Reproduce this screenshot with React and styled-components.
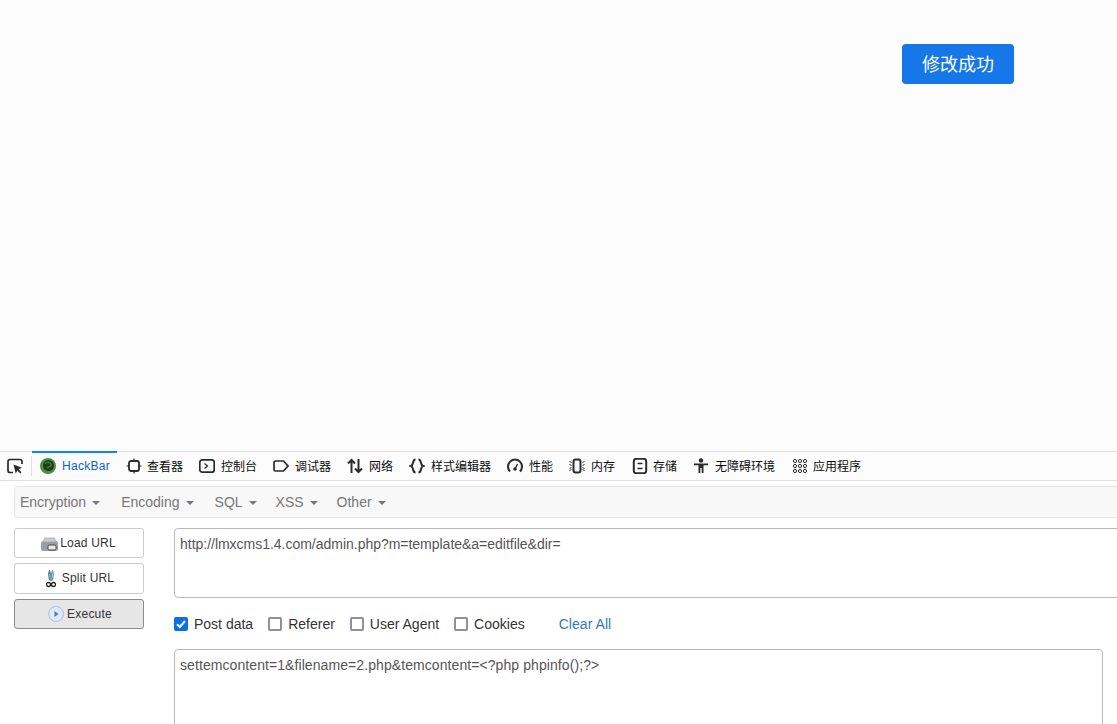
import React from "react";
import styled, { createGlobalStyle } from "styled-components";

const Global = createGlobalStyle`
  html, body { margin: 0; padding: 0; background: #fff; }
  #root { width: 1117px; height: 724px; overflow: hidden; }
  * { box-sizing: border-box; }
`;
const LATIN = `"Liberation Sans", Arial, sans-serif`;
const CJK = `"Liberation Sans", "Noto Sans CJK SC", sans-serif`;

const Page = styled.div`
  width: 1117px; height: 724px; overflow: hidden;
  display: flex; flex-direction: column; font-family: ${LATIN};
`;
const Viewport = styled.div`
  height: 451px; flex: none; background: #fcfcfc;
  display: flex; justify-content: flex-end; align-items: flex-start;
  padding: 44px 103px 0 0;
`;
const Toast = styled.div`
  width: 112px; height: 40px; border-radius: 4px; background: #1677e9; color: #fff;
  display: flex; align-items: center; justify-content: center;
  font: 18px ${CJK}; padding-bottom: 2px;
`;
const Toolbar = styled.div`
  height: 30px; flex: none; background: #fcfcfc;
  border-top: 1px solid #e0e0e1; border-bottom: 1px solid #e0e0e1;
  display: flex; align-items: stretch;
`;
const Picker = styled.div`
  width: 32px; flex: none; display: flex; align-items: center; padding-left: 7px; position: relative;
  &::after { content: ""; position: absolute; right: 0; top: 4px; bottom: 4px; width: 1px; background: #e0e0e1; }
`;
const Tab = styled.div`
  display: flex; align-items: center; gap: ${p => p.$gap ?? 6}px;
  width: ${p => p.$w}px; flex: none; padding-left: ${p => p.$pl ?? 8}px;
  font: 12px ${CJK}; color: ${p => (p.$active ? "#0a62d0" : "#0c0c0d")};
  position: relative;
  ${p => p.$active && `&::before { content: ""; position: absolute; left: 0; right: 0; top: -1px; height: 2px; background: #0a84ff; }`}
`;
const TabLabel = styled.span`
  margin-bottom: ${p => (p.$latin ? 0 : 2)}px;
  letter-spacing: ${p => (p.$latin ? 0.3 : 0)}px;
`;
const Panel = styled.div`
  flex: 1; background: #fff; padding: 5px 0 0 14px; min-height: 0;
`;
const Menu = styled.div`
  width: 1120px; height: 32px; background: #f8f8f8; border: 1px solid #e7e7e7; border-radius: 4px 0 0 4px;
  display: flex; align-items: center; padding-left: 5px;
  margin-bottom: 10px;
`;
const MenuItem = styled.div`
  display: flex; align-items: center; gap: 6px; font-size: 14px; color: #777;
  margin-right: ${p => p.$mr}px;
  &::after { content: ""; border-top: 4px solid #777; border-left: 4px solid transparent; border-right: 4px solid transparent; margin-top: 1px; }
`;
const Body = styled.div`
  display: flex; gap: 30px;
`;
const Side = styled.div`
  width: 130px; flex: none; display: flex; flex-direction: column; gap: 5px;
`;
const Btn = styled.div`
  height: ${p => p.$h}px; border-radius: 3px;
  border: 1px solid ${p => (p.$active ? "#8c8c8c" : "#ccc")};
  background: ${p => (p.$active ? "#e6e6e6" : "#fff")};
  color: #333; font-size: 12px; letter-spacing: 0.2px;
  display: flex; align-items: center; justify-content: center; gap: ${p => p.$gap ?? 2}px;
  padding: 0 ${p => p.$pr ?? 0}px ${p => p.$pb ?? 0}px ${p => p.$pl ?? 0}px;
`;
const Main = styled.div`
  width: 960px; flex: none; display: flex; flex-direction: column;
`;
const Area = styled.div`
  width: ${p => p.$w}px; height: ${p => p.$h}px; flex: none;
  border: 1px solid #b9b9b9; border-radius: 4px; background: #fff;
  padding: 7px 5px; font-size: 14px; line-height: 17px; color: #555; white-space: pre;
  letter-spacing: ${p => p.$ls ?? 0}px;
`;
const Checks = styled.div`
  height: 51px; display: flex; align-items: center;
`;
const Check = styled.label`
  display: flex; align-items: center; gap: 6px; font-size: 14px; color: #333; margin-right: ${p => p.$mr}px;
`;
const Box = styled.span`
  width: 14px; height: 14px; border-radius: 2px; flex: none;
  border: 2px solid ${p => (p.$on ? "#0a6fe0" : "#8f8f9d")};
  background: ${p => (p.$on ? "#0a6fe0" : "#fff")};
  display: flex; align-items: center; justify-content: center;
`;
const ClearAll = styled.span`
  font-size: 14px; color: #337ab7; letter-spacing: 0.05px;
`;

const Ic = ({ children, w = 16, h = 16, vb }) => (
  <svg width={w} height={h} viewBox={vb || `0 0 ${w} ${h}`} fill="none" stroke="#2b2b2e" strokeWidth="1.7" style={{ flex: "none" }}>
    {children}
  </svg>
);

const Logo = () => (
  <svg width="16" height="16" viewBox="0 0 16 16" style={{ flex: "none" }}>
    <circle cx="8" cy="8" r="8" fill="#4a8f42" />
    <circle cx="8.500" cy="7.500" r="5.500" fill="#1f3d1c" />
    <path d="M5 5.500c3-2 6-1 6.500 1.500-1 2-3 1.500-4.500 3" stroke="#4c7f45" strokeWidth="1.300" fill="none" />
  </svg>
);

const tabs = [
  { w: 74, label: "查看器", gap: 5, pl: 9, icon: <Ic><rect x="3" y="3" width="10" height="10" rx="2" strokeWidth="1.800" /><path d="M8 0.500v2.500M8 13v2.500M0.500 8H3M13 8h2.500" strokeWidth="1.200" /></Ic> },
  { w: 74, label: "控制台", icon: <Ic><rect x="0.800" y="1.800" width="14.400" height="12.400" rx="2.500" /><path d="M5.500 5.500L8.500 8l-3 2.500" strokeWidth="1.300" /></Ic> },
  { w: 74, label: "调试器", icon: <Ic><path d="M1 4.500a1.500 1.500 0 0 1 1.500-1.500h8L15 8l-4.500 5h-8A1.500 1.500 0 0 1 1 11.500z" /></Ic> },
  { w: 62, label: "网络", gap: 6, icon: <Ic><path d="M4.500 15V2M1 5.500L4.500 2 8 5.500M11.500 1v13M8 10.500l3.500 3.500 3.500-3.500" strokeWidth="2" /></Ic> },
  { w: 98, label: "样式编辑器", icon: <Ic><path d="M6.500 1.500C3 1.500 5.200 7 2 8c3.200 1 1 6.500 4.500 6.500M9.500 1.500C13 1.500 10.800 7 14 8c-3.200 1-1 6.500-4.500 6.500" strokeWidth="2" /></Ic> },
  { w: 62, label: "性能", icon: <Ic><path d="M3 13.500a7 7 0 1 1 10 0" strokeWidth="2" /><path d="M8.500 10l2-4" strokeWidth="1.400" /><circle cx="8" cy="11" r="1.800" fill="#2b2b2e" stroke="none" /></Ic> },
  { w: 63, label: "内存", icon: <Ic><rect x="4.500" y="1.500" width="7" height="13" rx="2.200" strokeWidth="2" /><path d="M0.500 3L2.500 5M0.500 6.500l2 1M0.500 10.500l2-1M0.500 13l2-2M15.500 3L13.500 5M15.500 6.500l-2 1M15.500 10.500l-2-1M15.500 13l-2-2" strokeWidth="1" /></Ic> },
  { w: 61, label: "存储", gap: 5, icon: <Ic><rect x="1.800" y="0.800" width="12.400" height="14.400" rx="2.500" strokeWidth="2" /><path d="M5.500 5.500h5M5.500 10.500h5" strokeWidth="1.300" /></Ic> },
  { w: 99, label: "无障碍环境", gap: 6, icon: <Ic><circle cx="8" cy="2.500" r="2.200" fill="#2b2b2e" stroke="none" /><path d="M1 5.500h14v1.800h-4.500V15H8.700v-5H7.300v5H5.500V7.300H1z" fill="#2b2b2e" stroke="none" /></Ic> },
  { w: 80, label: "应用程序", gap: 5, icon: <Ic><g strokeWidth="1">{[3, 8, 13].flatMap(y => [3, 8, 13].map(x => <circle key={x + "-" + y} cx={x} cy={y} r="1.600" />))}</g></Ic> },
];

const Check9 = () => (
  <svg width="10" height="10" viewBox="0 0 10 10"><path d="M1 5.200L3.800 8 9 2" fill="none" stroke="#fff" strokeWidth="2" /></svg>
);

export default function App() {
  return (
    <Page>
      <Global />
      <Viewport><Toast>修改成功</Toast></Viewport>
      <Toolbar>
        <Picker>
          <Ic>
            <path d="M6 14.500H3a2 2 0 0 1-2-2V3.500a2 2 0 0 1 2-2h10a2 2 0 0 1 2 2V6" />
            <path d="M6.500 6.500l8.500 3.200-3.300 1.600 2.800 3-1.300 1.300-2.800-3-1.700 3z" fill="#2b2b2e" stroke="none" />
          </Ic>
        </Picker>
        <Tab $active $w={85} $gap={6}><Logo /><TabLabel $latin>HackBar</TabLabel></Tab>
        {tabs.map(t => (
          <Tab key={t.label} $w={t.w} $gap={t.gap} $pl={t.pl}>{t.icon}<TabLabel>{t.label}</TabLabel></Tab>
        ))}
      </Toolbar>
      <Panel>
        <Menu>
          <MenuItem $mr={21}>Encryption</MenuItem>
          <MenuItem $mr={21}>Encoding</MenuItem>
          <MenuItem $mr={19}>SQL</MenuItem>
          <MenuItem $mr={19}>XSS</MenuItem>
          <MenuItem $mr={0}>Other</MenuItem>
        </Menu>
        <Body>
          <Side>
            <Btn $h={30} $gap={1} $pr={2}>
              <svg width="19" height="15" viewBox="0 0 19 15" style={{ marginTop: 3 }}>
                <rect x="1" y="4" width="17" height="10" rx="2.500" fill="#9a9fa3" />
                <path d="M4.500 1h10l1.500 4H3z" fill="#c8ccd0" stroke="#9a9fa3" strokeWidth="0.600" />
                <rect x="8" y="8" width="8" height="5" rx="1.500" fill="#e8e8e8" stroke="#444" strokeWidth="1" />
              </svg>
              Load URL
            </Btn>
            <Btn $h={31} $gap={6} $pb={2} $pl={2}>
              <svg width="10" height="18" viewBox="0 0 10 18" style={{ marginTop: 2 }}>
                <path d="M4.500 11C2.500 7 2.500 3 3.500 0.800 4.200 3 5 6 5.500 11" fill="none" stroke="#4f7d96" strokeWidth="1.300" />
                <path d="M5.500 11C7.500 7 7.500 3 6.500 0.800 5.800 3 5 6 4.500 11" fill="none" stroke="#6f9ab3" strokeWidth="1.300" />
                <circle cx="2.500" cy="14.500" r="2" fill="none" stroke="#222" strokeWidth="1.300" />
                <circle cx="7.500" cy="14.500" r="2" fill="none" stroke="#222" strokeWidth="1.300" />
              </svg>
              Split URL
            </Btn>
            <Btn $h={30} $active $gap={3} $pl={2}>
              <svg width="16" height="16" viewBox="0 0 16 16">
                <circle cx="8" cy="8" r="7.500" fill="#dfe9f5" stroke="#a9c3e3" />
                <path d="M6.500 5l4 3-4 3z" fill="#3f7fc4" />
              </svg>
              Execute
            </Btn>
          </Side>
          <Main>
            <Area $w={960} $h={70} $ls={-0.02}>http://lmxcms1.4.com/admin.php?m=template&amp;a=editfile&amp;dir=</Area>
            <Checks>
              <Check $mr={15}><Box $on><Check9 /></Box>Post data</Check>
              <Check $mr={15}><Box />Referer</Check>
              <Check $mr={15}><Box />User Agent</Check>
              <Check $mr={34}><Box />Cookies</Check>
              <ClearAll>Clear All</ClearAll>
            </Checks>
            <Area $w={929} $h={120} $ls={0.08}>settemcontent=1&amp;filename=2.php&amp;temcontent=&lt;?php phpinfo();?&gt;</Area>
          </Main>
        </Body>
      </Panel>
    </Page>
  );
}
